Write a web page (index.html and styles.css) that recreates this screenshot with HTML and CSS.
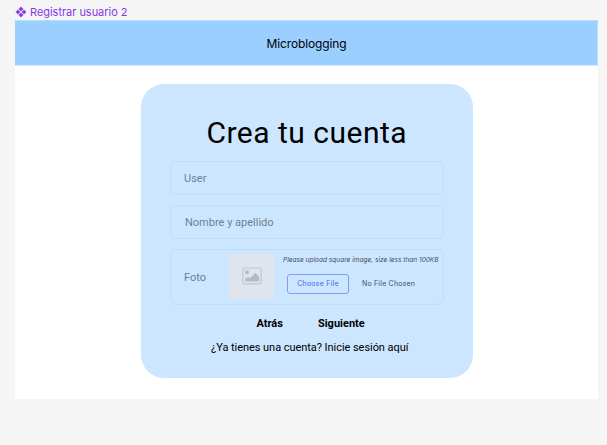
FILE: index.html
```html
<!DOCTYPE html>
<html lang="es">
<head>
<meta charset="utf-8">
<title>Registrar usuario 2</title>
<link rel="stylesheet" href="styles.css">
</head>
<body>
<div class="label">
  <svg class="label-icon" viewBox="0 0 12 12" width="12" height="12"><path d="M6 .7 8.3 3 6 5.3 3.7 3zM6 6.7 8.3 9 6 11.3 3.7 9zM3 3.7 5.3 6 3 8.3.7 6zM9 3.7 11.3 6 9 8.3 6.7 6z"/></svg>
  <span class="label-text">Registrar usuario 2</span>
</div>
<div class="frame">
  <header class="topbar"><span class="brand">Microblogging</span></header>
  <main class="card">
    <h1 class="title"><span>Crea tu cuenta</span></h1>
    <div class="field">User</div>
    <div class="field field-name">Nombre y apellido</div>
    <div class="field field-photo">
      <span class="photo-label">Foto</span>
      <div class="preview">
        <svg width="20" height="18" viewBox="0 0 20 18"><rect x=".8" y="1" width="18.4" height="15.8" rx="1.6" fill="none" stroke="#c0c5d0" stroke-width="1.2"/><circle cx="5" cy="5.3" r="2" fill="#b5bbc7"/><path d="M3 14.5v-2.5l3-2.3 2.3 1.2 5-5.1 4 4.3v4.4z" fill="#b5bbc7"/></svg>
      </div>
      <div class="upload">
        <span class="hint">Please upload square image, size less than 100KB</span>
        <div class="chooser">
          <button class="choose">Choose File</button>
          <span class="status">No File Chosen</span>
        </div>
      </div>
    </div>
    <nav class="actions"><b class="back">Atrás</b><b class="next">Siguiente</b></nav>
    <p class="login">¿Ya tienes una cuenta? Inicie sesión aquí</p>
  </main>
</div>
</body>
</html>
```
FILE: styles.css
```css
* { box-sizing: border-box; }
body {
  margin: 0;
  height: 445px;
  overflow: hidden;
  background: #f5f5f5;
  font-family: Roboto, sans-serif;
  color: #000;
  white-space: nowrap;
}
.label {
  display: flex;
  align-items: center;
  gap: 3px;
  height: 20px;
  padding: 4px 0 0 15px;
  color: #8638e5;
  font: 11px/14px Inter, sans-serif;
}
.label-icon { fill: #8638e5; stroke: #8638e5; stroke-width: .2; }
.label-text { letter-spacing: -.03px; }
.frame {
  width: 583px;
  height: 380px;
  margin-left: 15px;
  padding-bottom: 1px;
  background: #fff;
  background-clip: content-box;
}
.topbar {
  display: flex;
  align-items: center;
  justify-content: center;
  height: 46px;
  padding: 2px 0 0 1px;
  background: #9bcfff;
  border: 1px solid #bbdefe;
  border-bottom-color: #d3eafe;
  border-left-width: 0;
  font: 12px/16px Inter, sans-serif;
}
.brand { letter-spacing: -.12px; }
.card {
  width: 331.5px;
  height: 294px;
  margin: 18px 0 0 126px;
  padding: 28px 29px 0;
  border-radius: 23px;
  background: #cce6ff;
}
.title {
  margin: 0 0 9px;
  height: 40px;
  text-align: center;
  font: 400 30px/42px Roboto, sans-serif;
  letter-spacing: .5px;
}
.field {
  display: flex;
  align-items: center;
  height: 34px;
  margin-bottom: 10px;
  padding-left: 13px;
  border: 1px solid #c0ddf7;
  border-radius: 7px;
  color: #708090;
  font-size: 11px;
  letter-spacing: 0;
}
.field-name { padding-left: 14px; }
.field-photo { height: 56px; }
.photo-label { width: 45px; }
.preview {
  display: flex;
  align-items: center;
  justify-content: center;
  width: 45px;
  height: 45px;
  margin-bottom: 2px;
  border-radius: 3px;
  background: #e0e4ed;
}
.upload {
  display: flex;
  flex-direction: column;
  gap: 9px;
  margin: 0 0 6px 9px;
  font-family: Inter, sans-serif;
  color: #454e5d;
}
.hint { font-size: 6.5px; line-height: 10px; font-style: italic; letter-spacing: .02px; }
.chooser { display: flex; align-items: center; gap: 13px; padding-left: 4px; }
.choose {
  width: 62px;
  height: 20px;
  padding: 0;
  border: 1px solid #7d9dff;
  border-radius: 3px;
  background: none;
  color: #4b68e8;
  font: 7px/10px Inter, sans-serif;
  letter-spacing: .25px;
}
.status { font-size: 7px; line-height: 10px; letter-spacing: .2px; }
.actions {
  display: flex;
  gap: 35px;
  margin-top: 12px;
  padding-left: 86.5px;
  font-size: 11px;
  line-height: 13px;
}
.login {
  margin: 11px 0 0;
  padding-left: 6px;
  text-align: center;
  font-size: 11px;
  line-height: 13px;
  letter-spacing: -.05px;
}
```
